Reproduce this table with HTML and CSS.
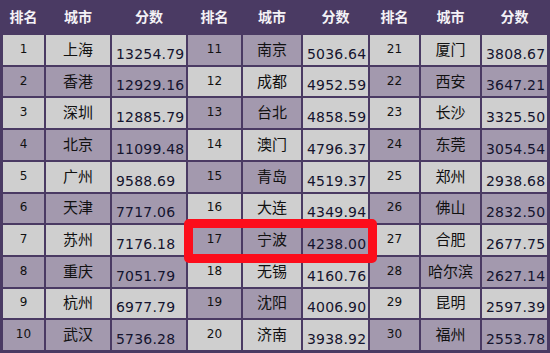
FILE: index.html
```html
<!DOCTYPE html>
<html lang="zh">
<head>
<meta charset="utf-8">
<link rel="stylesheet" href="styles.css">
</head>
<body>
<div class="board">
  <div class="table">
    <div class="th">排名</div><div class="th">城市</div><div class="th">分数</div>
    <div class="th">排名</div><div class="th">城市</div><div class="th">分数</div>
    <div class="th">排名</div><div class="th">城市</div><div class="th">分数</div>

    <div class="rk lt">1</div><div class="ct lt">上海</div><div class="sc lt">13254.79</div>
    <div class="rk pu">11</div><div class="ct pu">南京</div><div class="sc lt">5036.64</div>
    <div class="rk lt">21</div><div class="ct lt">厦门</div><div class="sc lt">3808.67</div>

    <div class="rk pu">2</div><div class="ct pu">香港</div><div class="sc pu">12929.16</div>
    <div class="rk lt">12</div><div class="ct lt">成都</div><div class="sc lt">4952.59</div>
    <div class="rk pu">22</div><div class="ct pu">西安</div><div class="sc pu">3647.21</div>

    <div class="rk lt">3</div><div class="ct lt">深圳</div><div class="sc lt">12885.79</div>
    <div class="rk pu">13</div><div class="ct pu">台北</div><div class="sc lt">4858.59</div>
    <div class="rk lt">23</div><div class="ct lt">长沙</div><div class="sc lt">3325.50</div>

    <div class="rk pu">4</div><div class="ct pu">北京</div><div class="sc pu">11099.48</div>
    <div class="rk lt">14</div><div class="ct lt">澳门</div><div class="sc lt">4796.37</div>
    <div class="rk pu">24</div><div class="ct pu">东莞</div><div class="sc pu">3054.54</div>

    <div class="rk lt">5</div><div class="ct lt">广州</div><div class="sc lt">9588.69</div>
    <div class="rk pu">15</div><div class="ct pu">青岛</div><div class="sc lt">4519.37</div>
    <div class="rk lt">25</div><div class="ct lt">郑州</div><div class="sc lt">2938.68</div>

    <div class="rk pu">6</div><div class="ct pu">天津</div><div class="sc pu">7717.06</div>
    <div class="rk lt">16</div><div class="ct lt">大连</div><div class="sc lt">4349.94</div>
    <div class="rk pu">26</div><div class="ct pu">佛山</div><div class="sc pu">2832.50</div>

    <div class="rk lt">7</div><div class="ct lt">苏州</div><div class="sc lt">7176.18</div>
    <div class="rk pu">17</div><div class="ct pu">宁波</div><div class="sc pu">4238.00</div>
    <div class="rk lt">27</div><div class="ct lt">合肥</div><div class="sc lt">2677.75</div>

    <div class="rk pu">8</div><div class="ct pu">重庆</div><div class="sc pu">7051.79</div>
    <div class="rk lt">18</div><div class="ct lt">无锡</div><div class="sc lt">4160.76</div>
    <div class="rk pu">28</div><div class="ct pu">哈尔滨</div><div class="sc pu">2627.14</div>

    <div class="rk lt">9</div><div class="ct lt">杭州</div><div class="sc lt">6977.79</div>
    <div class="rk pu">19</div><div class="ct pu">沈阳</div><div class="sc lt">4006.90</div>
    <div class="rk lt">29</div><div class="ct lt">昆明</div><div class="sc lt">2597.39</div>

    <div class="rk pu">10</div><div class="ct pu">武汉</div><div class="sc pu">5736.28</div>
    <div class="rk lt">20</div><div class="ct lt">济南</div><div class="sc lt">3938.92</div>
    <div class="rk pu">30</div><div class="ct pu">福州</div><div class="sc pu">2553.78</div>
  </div>
  <div class="highlight"></div>
</div>
</body>
</html>
```
FILE: styles.css
```css
html, body {
  margin: 0;
  padding: 0;
  background: #ffffff;
}

.board {
  position: relative;
  width: 550px;
  height: 353px;
}

.table {
  box-sizing: border-box;
  width: 550px;
  height: 353px;
  background: #4a3a63;
  padding: 0 3px 3px 3px;
  display: grid;
  grid-template-columns: 41px 64px 74px 53px 58px 65px 49px 59px 65px;
  grid-template-rows: 33px repeat(10, 1fr);
  column-gap: 2px;
  row-gap: 2px;
}

.th {
  display: flex;
  align-items: center;
  justify-content: center;
  color: #f4f2f6;
  font-family: "Noto Sans CJK SC", sans-serif;
  font-weight: 700;
  font-size: 14px;
  padding-bottom: 1px;
}

.lt { background: #cfcfcf; }
.pu { background: #a399ae; }

.rk {
  display: flex;
  align-items: center;
  justify-content: center;
  font-family: "DejaVu Sans", sans-serif;
  font-size: 12px;
  color: #111111;
  padding-bottom: 2px;
}

.ct {
  display: flex;
  align-items: center;
  justify-content: center;
  font-family: "Noto Sans CJK SC", sans-serif;
  font-size: 15px;
  color: #111111;
  padding-bottom: 3px;
}

.sc {
  display: flex;
  align-items: flex-end;
  justify-content: flex-start;
  padding-left: 4px;
  padding-bottom: 3px;
  font-family: "DejaVu Sans", sans-serif;
  font-size: 14px;
  letter-spacing: 0.2px;
  color: #14142e;
}

.highlight {
  position: absolute;
  left: 184px;
  top: 219px;
  width: 193px;
  height: 44px;
  box-sizing: border-box;
  border: 9px solid #fc0d1b;
  border-radius: 5px;
}
```
